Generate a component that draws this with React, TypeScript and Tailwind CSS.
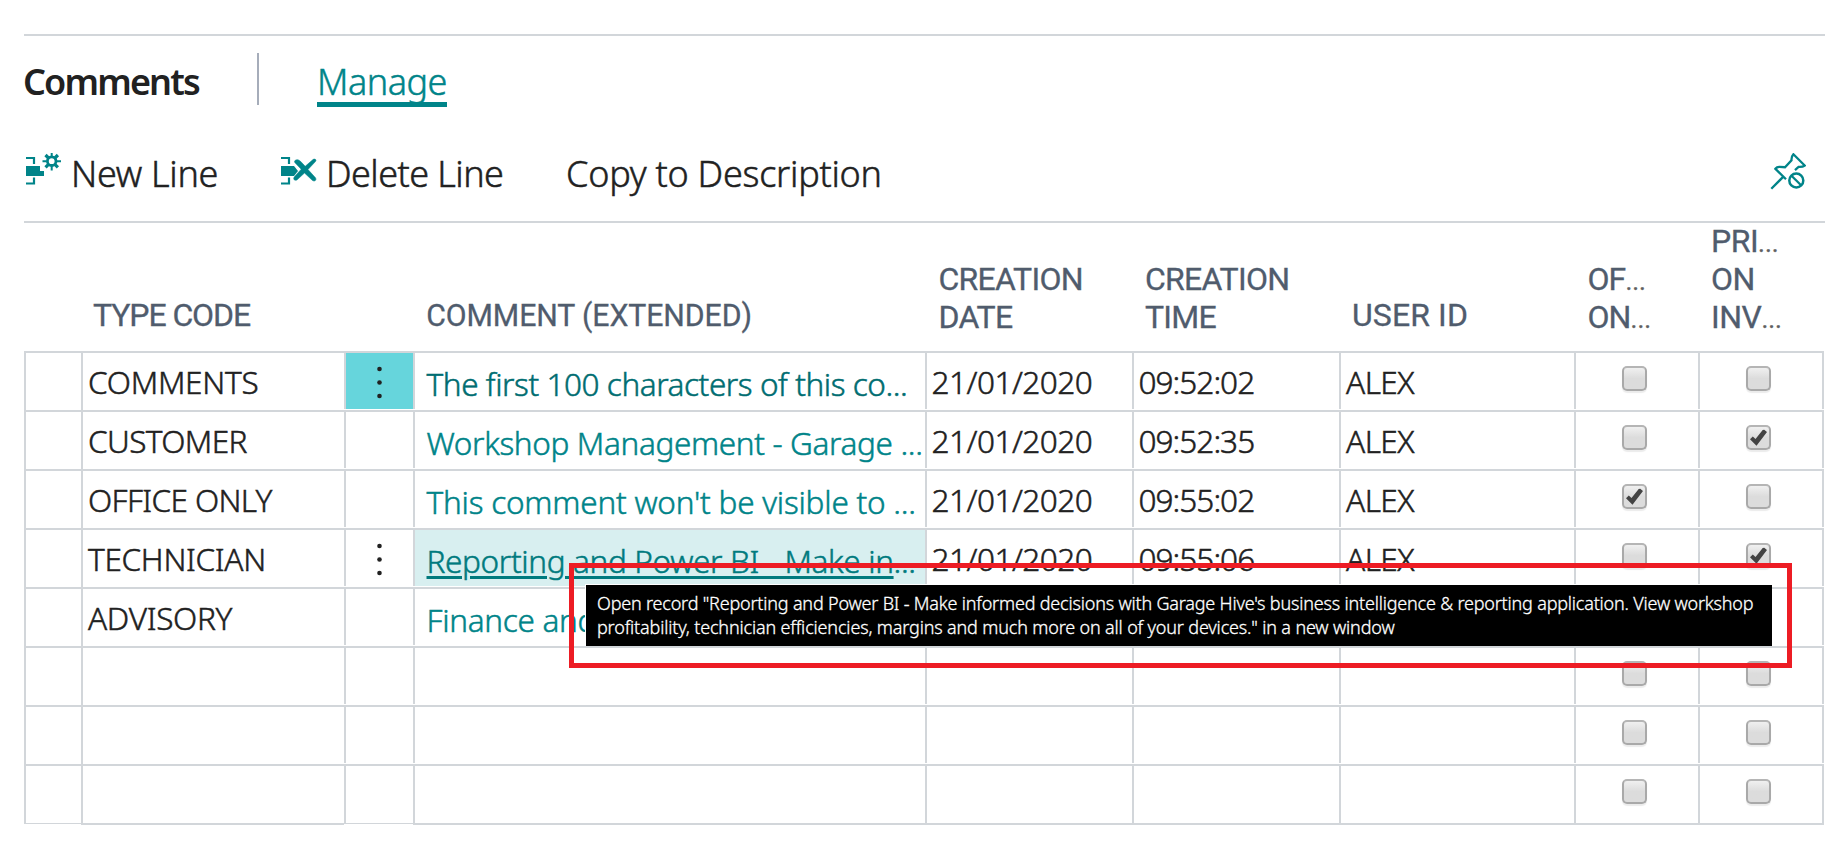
import type { ReactNode } from 'react';

function NewLineIcon() {
  return (
    <svg className="mt-[5px] block" width="38" height="34" viewBox="0 0 38 34" fill="none" stroke="#008489">
      <path d="M2 5h8v6M2 30.5h8v-6" strokeWidth="2.2" />
      <path d="M2 13h14v5h4v5H2z" fill="#008489" stroke="none" />
      <circle cx="27.7" cy="8.2" r="4.3" strokeWidth="2.8" />
      <path d="M21.500 2l3.500 3.500M33.900 2l-3.500 3.500M21.500 14.400l3.500-3.500M33.900 14.400l-3.500-3.500" strokeWidth="3.200" />
      <path d="M27.700 0v4M27.700 13v4.500M18.500 8.200h4M32.500 8.200h4.500" strokeWidth="2" />
    </svg>
  );
}

function DeleteLineIcon() {
  return (
    <svg className="mt-[5px] block" width="38" height="34" viewBox="0 0 38 34" fill="none" stroke="#008489">
      <path d="M2 5h8v6M2 30.500h8v-6" strokeWidth="2.200" />
      <path d="M2 13h13l4 5-4 5H2z" fill="#008489" stroke="none" />
      <path d="M16 7.500c1.500-1.500 4-.8 5.500.8l4.700 5L34 6.500c2-1.300 4 .5 2.500 2L29 16.500l7.500 8.300c1.500 2.500-1 4-3 2.700L25.500 20l-7.300 6.800c-2.500 1.500-4.500-.6-3-2.800l7-7.800-6-6.200c-.9-1-.9-1.800-.2-2.500z" fill="#008489" stroke="#008489" strokeWidth="0.500" />
    </svg>
  );
}

function UnpinIcon() {
  return (
    <svg className="block" width="36" height="37" viewBox="0 0 36 37" fill="none" stroke="#008489" strokeWidth="2.300">
      <path d="M1.300 35.700L13.400 23.600M16 26.300L5.400 15.800Q7 13.600 9.600 13.800L15 14.200L21.500 7.300Q21.200 3.700 23.400 1.300L34.700 12.500Q32.500 14.300 28.500 13.900L25 17.200" />
      <circle cx="26.300" cy="27.500" r="7" strokeWidth="2.500" />
      <path d="M21.500 22.700l9.600 9.600" />
    </svg>
  );
}

function Checkbox({ checked }: { checked: boolean }) {
  return (
    <div className="ml-[46px] mt-[13px] size-[25px] rounded-[5px] border-2 border-[#a9a9a9] border-t-[#b5b5b5] bg-linear-to-b from-[#f0f0f0] to-[#dcdcdc] to-50% shadow-[0_2px_1px_rgba(0,0,0,0.08)]">
      {checked && (
        <svg className="-ml-0.5 -mt-0.5 block" width="25" height="25" viewBox="0 0 25 25">
          <path d="M4 14.300L6.800 11.600L9.500 14L16.700 5L18.200 4.700L21 7L10.500 20.700z" fill="#434343" />
        </svg>
      )}
    </div>
  );
}

function Dots() {
  return (
    <svg className="mx-auto block" width="8" height="56" viewBox="0 0 8 56" fill="#212121">
      <circle cx="3.500" cy="16" r="2.300" />
      <circle cx="3.500" cy="29.500" r="2.300" />
      <circle cx="3.500" cy="43" r="2.300" />
    </svg>
  );
}

function Ellipsis() {
  return <span className="text-[26px] leading-none tracking-normal text-[#606060]">...</span>;
}

type Row = {
  code: string;
  codeCls: string;
  comment: string;
  tail?: string;
  comCls: string;
  time: string;
  office: boolean;
  invoice: boolean;
  active?: boolean;
  hover?: boolean;
};

const blank: Row = { code: '', codeCls: '', comment: '', comCls: '', time: '', office: false, invoice: false };

const rows: Row[] = [
  { code: 'COMMENTS', codeCls: 'tracking-[-0.25px]', comment: 'The first 100 characters of this co', tail: '...', comCls: 'text-[#006d71] tracking-[-0.43px]', time: '09:52:02', office: false, invoice: false, active: true },
  { code: 'CUSTOMER', codeCls: 'tracking-[-0.6px]', comment: 'Workshop Management - Garage ', tail: '...', comCls: 'text-[#008489] tracking-[-0.35px]', time: '09:52:35', office: false, invoice: true },
  { code: 'OFFICE ONLY', codeCls: 'tracking-[-0.6px]', comment: "This comment won't be visible to ", tail: '...', comCls: 'text-[#008489] tracking-[-0.22px]', time: '09:55:02', office: true, invoice: false },
  { code: 'TECHNICIAN', codeCls: 'tracking-[-0.3px]', comment: 'Reporting and Power BI - Make in', tail: '...', comCls: 'text-[#007a7e] tracking-[-0.35px]', time: '09:55:06', office: false, invoice: true, hover: true },
  { code: 'ADVISORY', codeCls: 'tracking-[-0.3px]', comment: 'Finance and', comCls: 'text-[#008489] tracking-[-0.3px]', time: '', office: false, invoice: false },
  blank,
  blank,
  blank,
];

const cols = 'grid grid-cols-[57px_263px_69px_512px_207px_207px_235px_124px_126px]';

function Cell({ last, short, full, className = '', children }: { last: boolean; short?: boolean; full?: boolean; className?: string; children?: ReactNode }) {
  const foot = last ? (short ? 'border-b mb-px' : 'border-b-2') : full ? '' : 'mb-px';
  return <div className={`border-l-2 border-[#d2d6da] overflow-hidden whitespace-nowrap ${foot} ${className}`}>{children}</div>;
}

export default function App() {
  return (
    <div className="relative h-[848px] w-[1846px] overflow-hidden bg-white pl-6 pt-[34px] font-['Noto_Sans',sans-serif] font-light text-[#212121] [-webkit-text-stroke:0.5px]">
      <div className="w-[1801px] border-t-2 border-[#d2d6da]">
        <div className="flex pt-[17px] text-[36px] leading-[47px]">
          <h2 className="-ml-px mt-[5px] w-[234px] font-semibold tracking-[-1.85px] [-webkit-text-stroke:0]">Comments</h2>
          <div className="h-[52px] w-0.5 bg-[#a6adba]" />
          <a className="ml-[58px] h-[54px] w-[130px] border-b-[5px] border-[#008489] pt-[5px] tracking-[-0.5px] text-[#008489]">
            Manage
          </a>
        </div>
        <div className="flex h-[114px] pt-[41px] text-[36px] leading-[51px]">
          <div className="flex w-[255px] tracking-[-0.3px]"><NewLineIcon /><span className="ml-[9px]">New Line</span></div>
          <div className="flex w-[287px] tracking-[-0.55px]"><DeleteLineIcon /><span className="ml-[9px]">Delete Line</span></div>
          <span className="tracking-[-0.25px]">Copy to Description</span>
          <div className="ml-auto mr-[19px] mt-[5px]"><UnpinIcon /></div>
        </div>
      </div>

      <div className={`${cols} h-[130px] w-[1801px] content-end items-end whitespace-nowrap border-t-2 border-[#d2d6da] pb-[17px] font-['Roboto',sans-serif] text-[32px] font-normal leading-[38px] text-[#505c6d] [-webkit-text-stroke:0.3px]`}>
        <div />
        <div className="pl-[12px] tracking-[-1.1px]">TYPE CODE</div>
        <div />
        <div className="origin-left scale-x-[0.945] pl-[14px] tracking-[-0.1px]">COMMENT (EXTENDED)</div>
        <div className="-mb-0.5 pl-[13.5px] tracking-[-0.75px]">CREATION<br />DATE</div>
        <div className="-mb-0.5 pl-[13px] tracking-[-0.75px]">CREATION<br />TIME</div>
        <div className="pl-[13px] tracking-[0.1px]">USER ID</div>
        <div className="-mb-0.5 pl-[13.5px] tracking-[-0.9px]">OF<Ellipsis /><br />ON<Ellipsis /></div>
        <div className="-mb-0.5 pl-[13px] tracking-[-0.5px]">PRI<Ellipsis /><br />ON<br />INV<Ellipsis /></div>
      </div>

      <div className="w-[1800px] text-[31.5px] leading-[42px]">
        {rows.map((r, i) => {
          const last = i === rows.length - 1;
          return (
            <div key={i} className={`${cols} ${last ? 'h-[61px]' : 'h-[59px]'} border-t-2 border-[#d2d6da]`}>
              <Cell last={last} full short />
              <Cell last={last} full className={`pl-[5px] pt-2 ${r.codeCls}`}>{r.code}</Cell>
              <Cell last={last} short className={r.active ? 'bg-[#66d5dc]' : ''}>{(r.active || r.hover) && <Dots />}</Cell>
              <Cell last={last} className={`pl-[11.5px] pt-2.5 ${r.hover ? 'bg-[#d8eff0]' : ''} ${r.comCls}`}>
                <span className={r.hover ? 'underline decoration-[3px] underline-offset-[3px]' : ''}>{r.comment}</span>
                {r.tail}
              </Cell>
              <Cell last={last} className="pl-[4.5px] pt-2 tracking-[-0.5px]">{r.time && '21/01/2020'}</Cell>
              <Cell last={last} className="pl-[4.5px] pt-2 tracking-[-0.95px]">{r.time}</Cell>
              <Cell last={last} className="pl-[5px] pt-2 tracking-[-0.5px]">{r.time && 'ALEX'}</Cell>
              <Cell last={last}><Checkbox checked={r.office} /></Cell>
              <Cell last={last} className="border-r-2"><Checkbox checked={r.invoice} /></Cell>
            </div>
          );
        })}
      </div>

      <div className="absolute left-[569px] top-[563px] h-[105px] w-[1223px] border-[5px] border-[#ed1c24]">
        <div className="ml-[11px] mt-4 flex h-[62px] w-[1187px] flex-col whitespace-nowrap border-l border-t border-white bg-black pl-[11px] pt-[6px] text-[18px] leading-6 text-white [-webkit-text-stroke:0.3px]">
          <span className="tracking-[-0.19px]">Open record "Reporting and Power BI - Make informed decisions with Garage Hive's business intelligence &amp; reporting application. View workshop</span>
          <span className="tracking-[-0.16px]">profitability, technician efficiencies, margins and much more on all of your devices." in a new window</span>
        </div>
      </div>
    </div>
  );
}
